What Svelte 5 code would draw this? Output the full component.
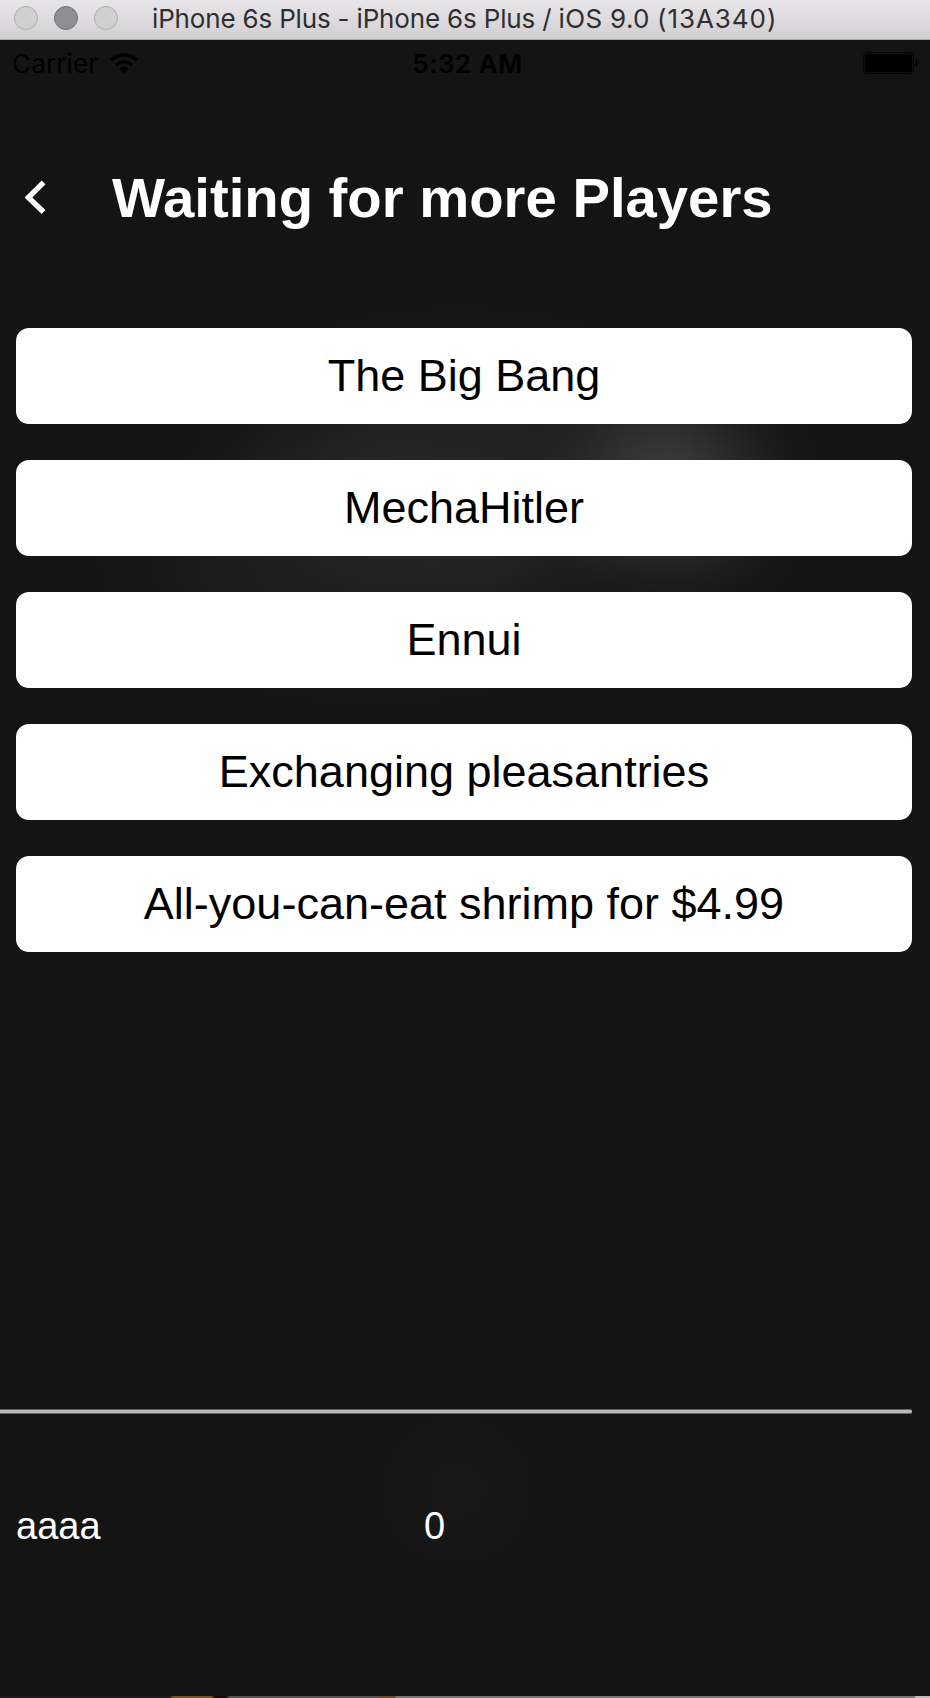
<script>
  const cards = ['The Big Bang', 'MechaHitler', 'Ennui', 'Exchanging pleasantries', 'All-you-can-eat shrimp for $4.99'];
  const players = [{ name: 'aaaa', score: 0 }];
</script>

<div class="window">
  <header class="titlebar">
    <div class="lights"><i></i><i class="active"></i><i></i></div>
    <span class="caption">iPhone 6s Plus - iPhone 6s Plus / <span class="os">iOS 9.0</span> <span class="build">(13A340)</span></span>
  </header>

  <main class="screen">
    <div class="status">
      <div class="carrier">
        <span class="carrier-name">Carrier</span>
        <svg width="28" height="21" viewBox="0 0 28 21">
          <path d="M1.2 7.4a18 18 0 0 1 25.6 0" fill="none" stroke="#000" stroke-width="3.4" />
          <path d="M5.9 12.2a11.4 11.4 0 0 1 16.2 0" fill="none" stroke="#000" stroke-width="3.2" />
          <path d="M14 20.5l-4.8-4.9a6.8 6.8 0 0 1 9.6 0z" />
        </svg>
      </div>
      <span class="time">5:32 AM</span>
      <svg class="battery" width="56" height="22" viewBox="0 0 56 22">
        <rect x="0.7" y="0.7" width="49.6" height="20.6" rx="3" fill="none" stroke="#000" stroke-width="1" />
        <rect x="2" y="2" width="47" height="18" rx="1.6" />
        <path d="M52 7.4q3 1 3 3.6t-3 3.6z" />
      </svg>
    </div>

    <div class="heading">
      <svg class="back" width="22" height="36" viewBox="0 0 22 36">
        <path d="M18.6 2.4L3.4 17.5L18.6 32" fill="none" stroke="#fff" stroke-width="5.4" />
      </svg>
      <h1>Waiting for more Players</h1>
    </div>

    <div class="cards">
      {#each cards as card}
        <button>{card}</button>
      {/each}
    </div>

    <div class="divider"></div>

    {#each players as player}
      <div class="player"><span>{player.name}</span><span>{player.score}</span></div>
    {/each}
  </main>
  <div class="desktop"></div>
</div>

<style>
  :global(body) { background: #141414; }
  .window {
    width: 930px;
    height: 1698px;
    overflow: hidden;
    display: flex;
    flex-direction: column;
    font-family: "Liberation Sans", Arial, sans-serif;
    background: #141414;
  }
  .titlebar {
    height: 40px;
    flex: none;
    box-sizing: border-box;
    display: flex;
    align-items: center;
    padding-left: 14px;
    padding-bottom: 3px;
    border-bottom: 1px solid #aaa8aa;
    background: linear-gradient(#e8e6e8, #d1cfd1);
  }
  .lights { display: flex; gap: 16px; width: 138px; flex: none; }
  .lights i {
    width: 24px;
    height: 24px;
    box-sizing: border-box;
    border: 1px solid #aeadae;
    border-radius: 50%;
    background: #d1d0d1;
  }
  .lights .active { background: #8f8e92; border-color: #737276; }
  .caption {
    padding-top: 2px;
    font: 26px/34px Inter, sans-serif;
    color: #2f2e31;
    white-space: pre;
    letter-spacing: -0.17px;
  }
  .os { letter-spacing: 0.35px; }
  .build { letter-spacing: 0.95px; }
  .screen {
    flex: 1;
    display: flex;
    flex-direction: column;
    background:
      radial-gradient(ellipse 155px 150px at 674px 445px, rgba(255, 255, 255, .155), rgba(255, 255, 255, .135) 20%, rgba(255, 255, 255, .085) 42%, rgba(255, 255, 255, .035) 66%, rgba(255, 255, 255, .008) 86%, transparent),
      radial-gradient(ellipse 275px 155px at 460px 415px, rgba(255, 255, 255, .06), rgba(255, 255, 255, .055) 30%, rgba(255, 255, 255, .03) 62%, rgba(255, 255, 255, .01) 84%, transparent),
      radial-gradient(ellipse 290px 150px at 375px 522px, rgba(255, 255, 255, .048), rgba(255, 255, 255, .044) 40%, rgba(255, 255, 255, .025) 68%, rgba(255, 255, 255, .008) 86%, transparent),
      radial-gradient(circle 85px at 457px 1450px, rgba(255, 255, 255, .022), transparent),
      #141414;
  }
  .status {
    height: 46px;
    flex: none;
    display: grid;
    grid-template-columns: 1fr auto 1fr;
    align-items: center;
    padding: 0 11px 0 12px;
    font: 26px/30px Inter, sans-serif;
    color: #000;
  }
  .carrier { display: flex; align-items: center; gap: 12px; }
  .carrier-name { padding-top: 2px; letter-spacing: .15px; }
  .time { font-weight: 600; letter-spacing: .5px; padding: 2px 0 0 4px; }
  .battery { justify-self: end; }
  .heading {
    height: 242px;
    flex: none;
    box-sizing: border-box;
    display: flex;
    align-items: flex-start;
    padding: 80px 0 0 25px;
  }
  .back { margin-top: 14px; flex: none; }
  h1 {
    margin: 0 0 0 65px;
    font-size: 56.25px;
    line-height: 63px;
    font-weight: 700;
    color: #fff;
    white-space: nowrap;
  }
  .cards { display: flex; flex-direction: column; gap: 36px; padding: 0 18px 0 16px; }
  button {
    height: 96px;
    padding: 0;
    border: 0;
    border-radius: 13px;
    background: #fff;
    color: #000;
    font: 45px/96px "Liberation Sans", Arial, sans-serif;
  }
  .divider {
    height: 5px;
    flex: none;
    box-sizing: border-box;
    width: 912px;
    margin-top: 457px;
    border: solid #676767;
    border-width: 1px 0;
    border-radius: 0 2px 2px 0;
    background: #bababa;
  }
  .player {
    display: grid;
    grid-template-columns: 408px 1fr;
    padding: 90px 0 0 16px;
    font-size: 38px;
    line-height: 44px;
    color: #fff;
  }
  .desktop {
    height: 2px;
    flex: none;
    background: linear-gradient(90deg, #211b20 170px, #705528 173px 211px, #160b05 215px 226px, #555 230px 378px, #66502b 381px 395px, #777 396px 914px, #bbb 916px);
  }
</style>
